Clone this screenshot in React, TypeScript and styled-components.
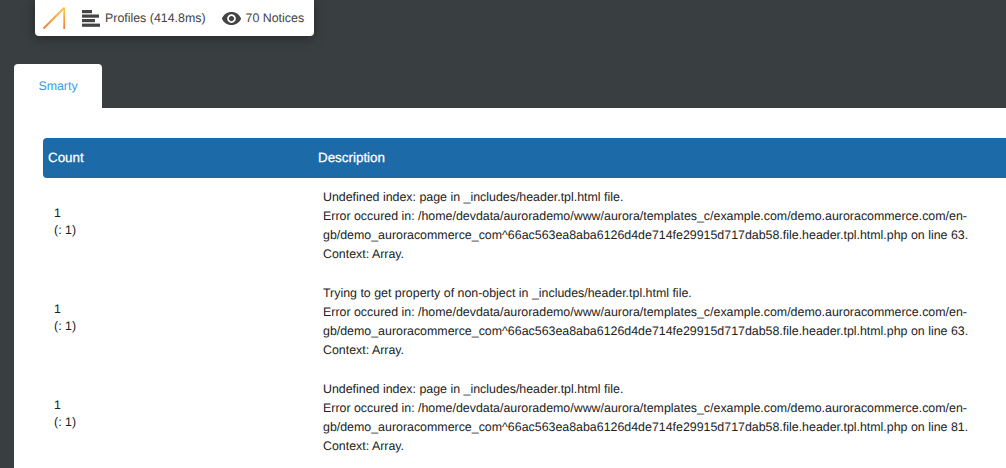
import React from "react";
import styled, { createGlobalStyle } from "styled-components";
import { MdRemoveRedEye } from "react-icons/md";

const GlobalStyle = createGlobalStyle`
  html, body {
    margin: 0;
    padding: 0;
    background: #393e41;
    font-family: "Liberation Sans", Arial, sans-serif;
    text-rendering: geometricPrecision;
    overflow: hidden;
  }
`;

const notices = [
  {
    message: "Undefined index: page in _includes/header.tpl.html file.",
    line: 63,
  },
  {
    message: "Trying to get property of non-object in _includes/header.tpl.html file.",
    line: 63,
  },
  {
    message: "Undefined index: page in _includes/header.tpl.html file.",
    line: 81,
  },
];

const errorPath =
  "/home/devdata/aurorademo/www/aurora/templates_c/example.com/demo.auroracommerce.com/en-gb/demo_auroracommerce_com^66ac563ea8aba6126d4de714fe29915d717dab58.file.header.tpl.html.php";

const App = () => {
  return (
    <Page>
      <GlobalStyle />
      <Toolbar>
        <Logo viewBox="0 0 24 24" width="24" height="24">
          <defs>
            <linearGradient id="logoGrad" gradientUnits="userSpaceOnUse" x1="1" y1="23" x2="22" y2="2">
              <stop offset="0" stopColor="#ef7d3c" />
              <stop offset="1" stopColor="#fbc94a" />
            </linearGradient>
            <linearGradient id="logoGradDown" gradientUnits="userSpaceOnUse" x1="22" y1="2" x2="22" y2="23">
              <stop offset="0" stopColor="#fbc94a" />
              <stop offset="1" stopColor="#ef7d3c" />
            </linearGradient>
          </defs>
          <path d="M1.5 22.5 L22 2" stroke="url(#logoGrad)" strokeWidth="1.9" fill="none" />
          <path d="M22.2 1.5 L22.2 23" stroke="url(#logoGradDown)" strokeWidth="1.8" fill="none" />
        </Logo>
        <ToolItem>
          <svg width="18" height="17" viewBox="0 0 18 17" fill="#444">
            <rect x="0" y="0" width="10" height="3.2" />
            <rect x="0" y="4.5" width="17" height="3.2" />
            <rect x="0" y="9" width="13" height="3.2" />
            <rect x="0" y="13.6" width="18" height="3.2" />
          </svg>
          Profiles (414.8ms)
        </ToolItem>
        <ToolItem>
          <MdRemoveRedEye size={21} color="#444" />
          70 Notices
        </ToolItem>
      </Toolbar>
      <Tabs>
        <Tab>Smarty</Tab>
      </Tabs>
      <Panel>
        <Table>
          <HeaderRow>
            <CountHead>Count</CountHead>
            <DescHead>Description</DescHead>
          </HeaderRow>
          {notices.map((n, i) => (
            <Row key={i}>
              <CountCell>
                1
                <br />
                (: 1)
              </CountCell>
              <DescCell>
                {n.message}
                <br />
                Error occured in: {errorPath} on line {n.line}.
                <br />
                Context: Array.
              </DescCell>
            </Row>
          ))}
        </Table>
      </Panel>
    </Page>
  );
};

const Page = styled.div`
  width: 1006px;
  height: 468px;
  overflow: hidden;
  padding-left: 14px;
  box-sizing: border-box;
`;

const Toolbar = styled.div`
  display: flex;
  align-items: center;
  width: 279px;
  height: 36px;
  margin-left: 21px;
  padding-left: 7px;
  box-sizing: border-box;
  background: #fff;
  border-radius: 0 0 4px 4px;
  box-shadow: 0 2px 12px rgba(0, 0, 0, 0.35);
`;

const Logo = styled.svg`
  margin-right: 16px;
  flex: none;
`;

const ToolItem = styled.div`
  display: flex;
  align-items: center;
  gap: 5px;
  margin-right: 15px;
  font-size: 12.4px;
  color: #444;
  white-space: nowrap;

  & + & {
    gap: 4px;
  }
`;

const Tabs = styled.div`
  display: flex;
  margin-top: 28px;
`;

const Tab = styled.div`
  width: 88px;
  height: 44px;
  background: #fff;
  border-radius: 4px 4px 0 0;
  font-size: 12.4px;
  line-height: 44px;
  text-align: center;
  color: #3e9be2;
`;

const Panel = styled.div`
  background: #fff;
  height: 360px;
  padding: 30px 0 0 29px;
  box-sizing: border-box;
`;

const Table = styled.div`
  width: 985px;
  font-size: 12.4px;
  color: #222;
`;

const HeaderRow = styled.div`
  display: grid;
  grid-template-columns: 275px 1fr;
  align-items: center;
  height: 40px;
  padding-bottom: 2px;
  box-sizing: border-box;
  background: #1c6aa8;
  border-radius: 4px;
  color: #fff;
  font-size: 13.4px;
  -webkit-text-stroke: 0.25px #fff;
`;

const CountHead = styled.div`
  padding-left: 5px;
`;

const DescHead = styled.div``;

const Row = styled.div`
  display: grid;
  grid-template-columns: 280px 648px;
  padding: 10px 0;
`;

const CountCell = styled.div`
  align-self: center;
  padding: 0 0 9px 11px;
  line-height: 17px;
`;

const DescCell = styled.div`
  line-height: 19px;
`;

export default App;
